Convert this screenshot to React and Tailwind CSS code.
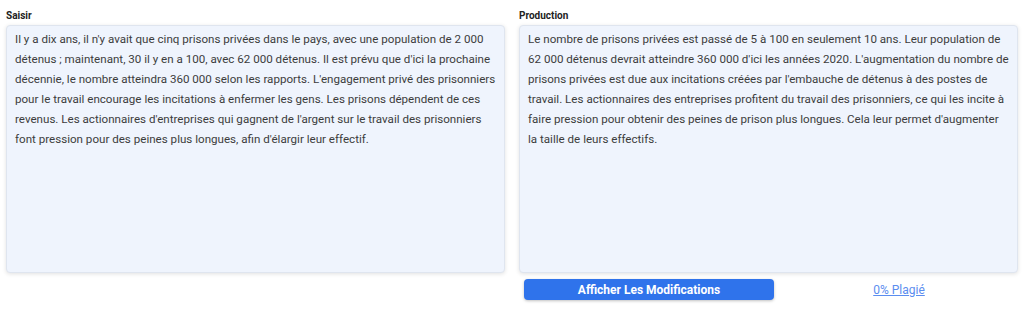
import React from 'react'

// line breaks follow the reference wrapping
const inputLines = [
  "Il y a dix ans, il n'y avait que cinq prisons privées dans le pays, avec une population de 2 000",
  "détenus ; maintenant, 30 il y en a 100, avec 62 000 détenus. Il est prévu que d'ici la prochaine",
  "décennie, le nombre atteindra 360 000 selon les rapports. L'engagement privé des prisonniers",
  "pour le travail encourage les incitations à enfermer les gens. Les prisons dépendent de ces",
  "revenus. Les actionnaires d'entreprises qui gagnent de l'argent sur le travail des prisonniers",
  "font pression pour des peines plus longues, afin d'élargir leur effectif.",
]

const outputLines = [
  "Le nombre de prisons privées est passé de 5 à 100 en seulement 10 ans. Leur population de",
  "62 000 détenus devrait atteindre 360 000 d'ici les années 2020. L'augmentation du nombre de",
  "prisons privées est due aux incitations créées par l'embauche de détenus à des postes de",
  "travail. Les actionnaires des entreprises profitent du travail des prisonniers, ce qui les incite à",
  "faire pression pour obtenir des peines de prison plus longues. Cela leur permet d'augmenter",
  "la taille de leurs effectifs.",
]

const Panel = ({ label, lines }) => (
  <div className="flex flex-col">
    <div className="h-[25px] pt-[10px] text-[10px] leading-[12px] font-bold text-[#222]">{label}</div>
    <div className="h-[248px] overflow-hidden rounded-[4px] border border-[#dfe5ef] bg-[#eff4fd] pl-[8px] pr-[2px] pt-[3px] text-[11.6px] leading-[20px] text-[#3c3c3c] shadow-[0_1px_4px_rgba(0,0,0,0.12)]">
      {lines.map((line, i) => (
        <div key={i} className="whitespace-nowrap">{line}</div>
      ))}
    </div>
  </div>
)

export default function App() {
  return (
    <div className="w-[1024px] h-[311px] bg-white px-[6px] font-['Roboto',sans-serif]">
      <div className="grid grid-cols-2 gap-[14px]">
        <Panel label="Saisir" lines={inputLines} />
        <Panel label="Production" lines={outputLines} />
      </div>
      <div className="grid grid-cols-2 gap-[14px] mt-[6px]">
        <div />
        <div className="flex items-center pl-[5px]">
          <button className="w-[250px] h-[21px] rounded-[4px] bg-[#2f73eb] text-white text-[12px] font-bold leading-none shadow-[0_1px_3px_rgba(0,0,0,0.25)]">
            Afficher Les Modifications
          </button>
          <div className="flex-1 flex justify-center pl-[6px]">
            <a href="#" className="text-[12px] text-[#5b8def] underline">0% Plagié</a>
          </div>
        </div>
      </div>
    </div>
  )
}
